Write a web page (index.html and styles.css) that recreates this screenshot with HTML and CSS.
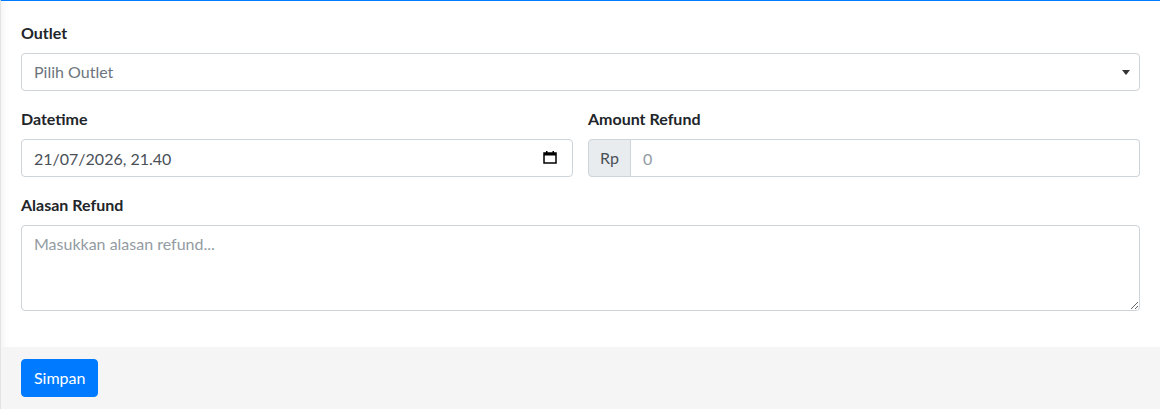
FILE: index.html
```html
<!DOCTYPE html>
<html lang="id">
<head>
    <meta charset="UTF-8">
    <meta name="viewport" content="width=device-width, initial-scale=1.0">
    <title>Refund</title>
    <link rel="stylesheet" href="styles.css">
</head>
<body>
    <div class="card card-outline">
        <form class="card-form">
            <div class="card-body">
                <div class="form-group">
                    <label class="form-label" for="outlet">Outlet</label>
                    <div class="select-wrap">
                        <select id="outlet" class="form-control form-select">
                            <option>Pilih Outlet</option>
                        </select>
                        <span class="select-arrow"></span>
                    </div>
                </div>

                <div class="form-row">
                    <div class="form-group col">
                        <label class="form-label" for="datetime">Datetime</label>
                        <div class="date-wrap">
                            <input id="datetime" type="text" class="form-control date-input" value="21/07/2026, 21.40">
                            <svg class="date-icon" width="14" height="14" viewBox="0 0 14 14">
                                <rect x="1" y="3" width="12" height="10" fill="none" stroke="#000" stroke-width="1.5"/>
                                <rect x="1" y="3" width="12" height="2.5" fill="#000"/>
                                <rect x="3" y="1" width="1.5" height="3" fill="#000"/>
                                <rect x="9.5" y="1" width="1.5" height="3" fill="#000"/>
                            </svg>
                        </div>
                    </div>
                    <div class="form-group col">
                        <label class="form-label" for="amount">Amount Refund</label>
                        <div class="input-group">
                            <span class="input-group-text">Rp</span>
                            <input id="amount" type="text" class="form-control group-input" placeholder="0">
                        </div>
                    </div>
                </div>

                <div class="form-group">
                    <label class="form-label" for="alasan">Alasan Refund</label>
                    <textarea id="alasan" class="form-control form-textarea" rows="3" placeholder="Masukkan alasan refund..."></textarea>
                </div>
            </div>

            <div class="card-footer">
                <button type="button" class="btn btn-primary">Simpan</button>
            </div>
        </form>
    </div>
</body>
</html>
```

FILE: styles.css
```css
* {
    margin: 0;
    padding: 0;
    box-sizing: border-box;
}

body {
    font-family: "Source Sans Pro", Lato, "Noto Sans", sans-serif;
    font-size: 16px;
    line-height: 1.5;
    color: #212529;
    background: #fff;
    overflow: hidden;
}

.card {
    margin-top: -2px;
    background: #fff;
    border-top: 3px solid #007bff;
    border-left: 1px solid #e3e3e3;
    box-shadow: inset 10px 0 10px -10px rgba(0,0,0,0.08);
}

.card-body {
    padding: 20px 20px 4px 20px;
}

.card-body > .form-group:last-child {
    margin-bottom: 32px;
}

.form-group {
    margin-bottom: 16px;
}

.form-label {
    display: block;
    font-weight: 700;
    margin-bottom: 8px;
}

.form-row {
    display: flex;
    gap: 15px;
}

.col {
    flex: 1;
    min-width: 0;
}

.form-control {
    display: block;
    width: 100%;
    height: 38px;
    padding: 6px 12px;
    font-family: inherit;
    font-size: 16px;
    line-height: 1.5;
    color: #495057;
    background: #fff;
    border: 1px solid #ced4da;
    border-radius: 4px;
    outline: none;
}

.form-control::placeholder {
    color: #939ba2;
}

.select-wrap,
.date-wrap {
    position: relative;
}

.form-select {
    appearance: none;
    -webkit-appearance: none;
    color: #6c757d;
}

.select-arrow {
    position: absolute;
    right: 10px;
    top: 17px;
    width: 0;
    height: 0;
    border-left: 4px solid transparent;
    border-right: 4px solid transparent;
    border-top: 5px solid #333;
}

.date-icon {
    position: absolute;
    right: 16px;
    top: 11px;
}

.input-group {
    display: flex;
}

.input-group-text {
    display: flex;
    align-items: center;
    padding: 6px 11px;
    color: #495057;
    background: #e9ecef;
    border: 1px solid #ced4da;
    border-radius: 4px 0 0 4px;
    height: 38px;
}

.group-input {
    flex: 1;
    border-left: none;
    border-radius: 0 4px 4px 0;
}

.form-textarea {
    height: 86px;
    resize: vertical;
}

.card-footer {
    background: #f5f5f5;
    padding: 12px 20px;
}

.btn {
    display: inline-block;
    padding: 6px 12px;
    font-family: inherit;
    font-size: 16px;
    line-height: 1.5;
    border: 1px solid transparent;
    border-radius: 4px;
    cursor: pointer;
}

.btn-primary {
    color: #fff;
    background: #007bff;
    border-color: #007bff;
}
```
